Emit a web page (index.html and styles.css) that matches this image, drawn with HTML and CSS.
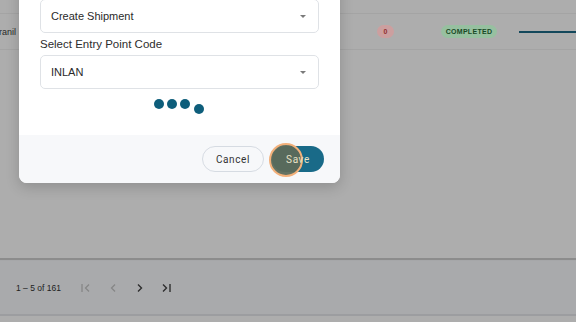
FILE: index.html
```html
<!DOCTYPE html>
<html lang="en">
<head>
    <meta charset="UTF-8">
    <meta name="viewport" content="width=device-width, initial-scale=1.0">
    <title>Shipments</title>
    <link rel="stylesheet" href="styles.css">
</head>
<body>

    <div class="page">
        <div class="table">
            <div class="row row-prev"></div>
            <div class="row">
                <div class="cell cell-name">Pranil</div>
                <div class="cell cell-count"><span class="badge badge-red">0</span></div>
                <div class="cell cell-status"><span class="badge badge-green">COMPLETED</span></div>
                <div class="cell cell-progress"><div class="progress"></div></div>
            </div>
        </div>

        <div class="paginator">
            <span class="range">1 – 5 of 161</span>
            <button class="pg-btn disabled" aria-label="First page">
                <svg width="12" height="12" viewBox="0 0 12 12"><path d="M2 2v8M9 2.5 5.5 6 9 9.5" fill="none" stroke="currentColor" stroke-width="1.3"/></svg>
            </button>
            <button class="pg-btn disabled" aria-label="Previous page">
                <svg width="12" height="12" viewBox="0 0 12 12"><path d="M8 2.5 4.5 6 8 9.5" fill="none" stroke="currentColor" stroke-width="1.3"/></svg>
            </button>
            <button class="pg-btn" aria-label="Next page">
                <svg width="12" height="12" viewBox="0 0 12 12"><path d="M4 2.5 7.5 6 4 9.5" fill="none" stroke="currentColor" stroke-width="1.4"/></svg>
            </button>
            <button class="pg-btn" aria-label="Last page">
                <svg width="12" height="12" viewBox="0 0 12 12"><path d="M3 2.5 6.5 6 3 9.5M10 2v8" fill="none" stroke="currentColor" stroke-width="1.4"/></svg>
            </button>
        </div>
    </div>

    <!-- Modal -->
    <div class="backdrop">
        <div class="dialog">
            <div class="dialog-body">
                <label class="field-label">Select Action</label>
                <div class="select">
                    <span>Create Shipment</span>
                    <span class="caret"></span>
                </div>
                <label class="field-label">Select Entry Point Code</label>
                <div class="select">
                    <span>INLAN</span>
                    <span class="caret"></span>
                </div>
                <div class="loader">
                    <span class="dot"></span>
                    <span class="dot"></span>
                    <span class="dot"></span>
                    <span class="dot dot-drop"></span>
                </div>
            </div>
            <div class="dialog-footer">
                <button class="btn btn-cancel">Cancel</button>
                <button class="btn btn-save"><span class="ripple"></span><span class="btn-text">Save</span></button>
            </div>
        </div>
    </div>

</body>
</html>
```

FILE: styles.css
```css
* {
    box-sizing: border-box;
}

body {
    margin: 0;
    height: 322px;
    overflow: hidden;
    font-family: "Liberation Sans", Arial, sans-serif;
    background-color: #d9d9d9;
    position: relative;
}

.page {
    height: 100%;
    display: flex;
    flex-direction: column;
}

/* Table underneath */
.table {
    flex: 1;
    border-bottom: 2px solid #b0b0b0;
}

.row {
    display: flex;
    align-items: center;
    height: 36px;
    border-bottom: 1px solid #cdcdcd;
}

.row-prev {
    height: 14px;
}

.cell {
    font-size: 9px;
    color: #333;
}

.cell-name {
    width: 368px;
    margin-left: -7px;
}

.cell-count {
    width: 80px;
    padding-left: 16px;
}

.cell-status {
    width: 78px;
}

.cell-progress {
    flex: 1;
}

.badge {
    display: inline-block;
    height: 13px;
    line-height: 13px;
    border-radius: 7px;
    font-size: 7px;
    font-weight: bold;
    letter-spacing: 0.3px;
    text-align: center;
}

.badge-red {
    min-width: 17px;
    padding: 0 5px;
    background-color: #ffc7c7;
    color: #b73a3a;
}

.badge-green {
    width: 56px;
    background-color: #bdf0c8;
    color: #1e5d30;
}

.progress {
    height: 2px;
    background-color: #185a72;
}

/* Paginator */
.paginator {
    height: 56px;
    display: flex;
    align-items: center;
    padding-left: 16px;
    background-color: #d4d5d8;
    border-top: 1px solid #d0d1d4;
    border-bottom: 2px solid #c4c5c8;
    margin-bottom: 6px;
}

.range {
    font-size: 8.5px;
    color: #2a2a2a;
    margin-right: 12px;
}

.pg-btn {
    width: 26.7px;
    height: 26px;
    padding: 0;
    border: none;
    background: transparent;
    color: #3a3a3a;
    display: flex;
    align-items: center;
    justify-content: center;
}

.pg-btn.disabled {
    color: #a8a8a8;
}

/* Modal */
.backdrop {
    position: absolute;
    top: 0;
    left: 0;
    width: 100%;
    height: 100%;
    background-color: rgba(0, 0, 0, 0.2);
}

.dialog {
    position: absolute;
    left: 19px;
    top: -39px;
    width: 321px;
    background-color: #fff;
    border-radius: 8px;
    overflow: hidden;
    box-shadow: 0 4px 14px rgba(0, 0, 0, 0.18);
}

.dialog-body {
    padding: 16px 21px 26px;
}

.field-label {
    display: block;
    font-size: 11.5px;
    line-height: 14px;
    padding: 4px 0;
    color: #2d2d2d;
}

.select {
    height: 34px;
    border: 1px solid #dfe2e6;
    border-radius: 5px;
    display: flex;
    align-items: center;
    justify-content: space-between;
    padding: 0 12px 0 10px;
    font-size: 11px;
    color: #2a2a2a;
}

.caret {
    width: 0;
    height: 0;
    border-left: 3.5px solid transparent;
    border-right: 3.5px solid transparent;
    border-top: 3.5px solid #7a7a7a;
}

.loader {
    display: flex;
    justify-content: center;
    gap: 3px;
    margin-top: 10px;
    padding-right: 2px;
    height: 10px;
}

.dot {
    width: 10px;
    height: 10px;
    border-radius: 50%;
    background-color: #0e5e7b;
}

.dot-drop {
    margin-left: 1px;
    transform: translateY(5px);
}

.dialog-footer {
    height: 48px;
    background-color: #f7f8fa;
    display: flex;
    align-items: center;
    justify-content: flex-end;
    gap: 8px;
    padding-right: 16px;
}

.btn {
    height: 26px;
    border-radius: 13px;
    font-family: Roboto, "Liberation Sans", sans-serif;
    font-size: 10px;
    letter-spacing: 0.6px;
    cursor: pointer;
}

.btn-cancel {
    width: 62px;
    border: 1px solid #d6dbe2;
    background-color: #f7f8fa;
    color: #333;
}

.btn-save {
    width: 52px;
    border: none;
    background-color: #196a88;
    color: #e9e1c6;
    position: relative;
    padding: 0;
}

.btn-text {
    position: relative;
    z-index: 1;
}

/* click indicator */
.ripple {
    position: absolute;
    left: -3px;
    top: -3px;
    width: 34px;
    height: 34px;
    border-radius: 50%;
    border: 2px solid #f2b07a;
    background-color: rgba(92, 106, 90, 0.95);
}
```
